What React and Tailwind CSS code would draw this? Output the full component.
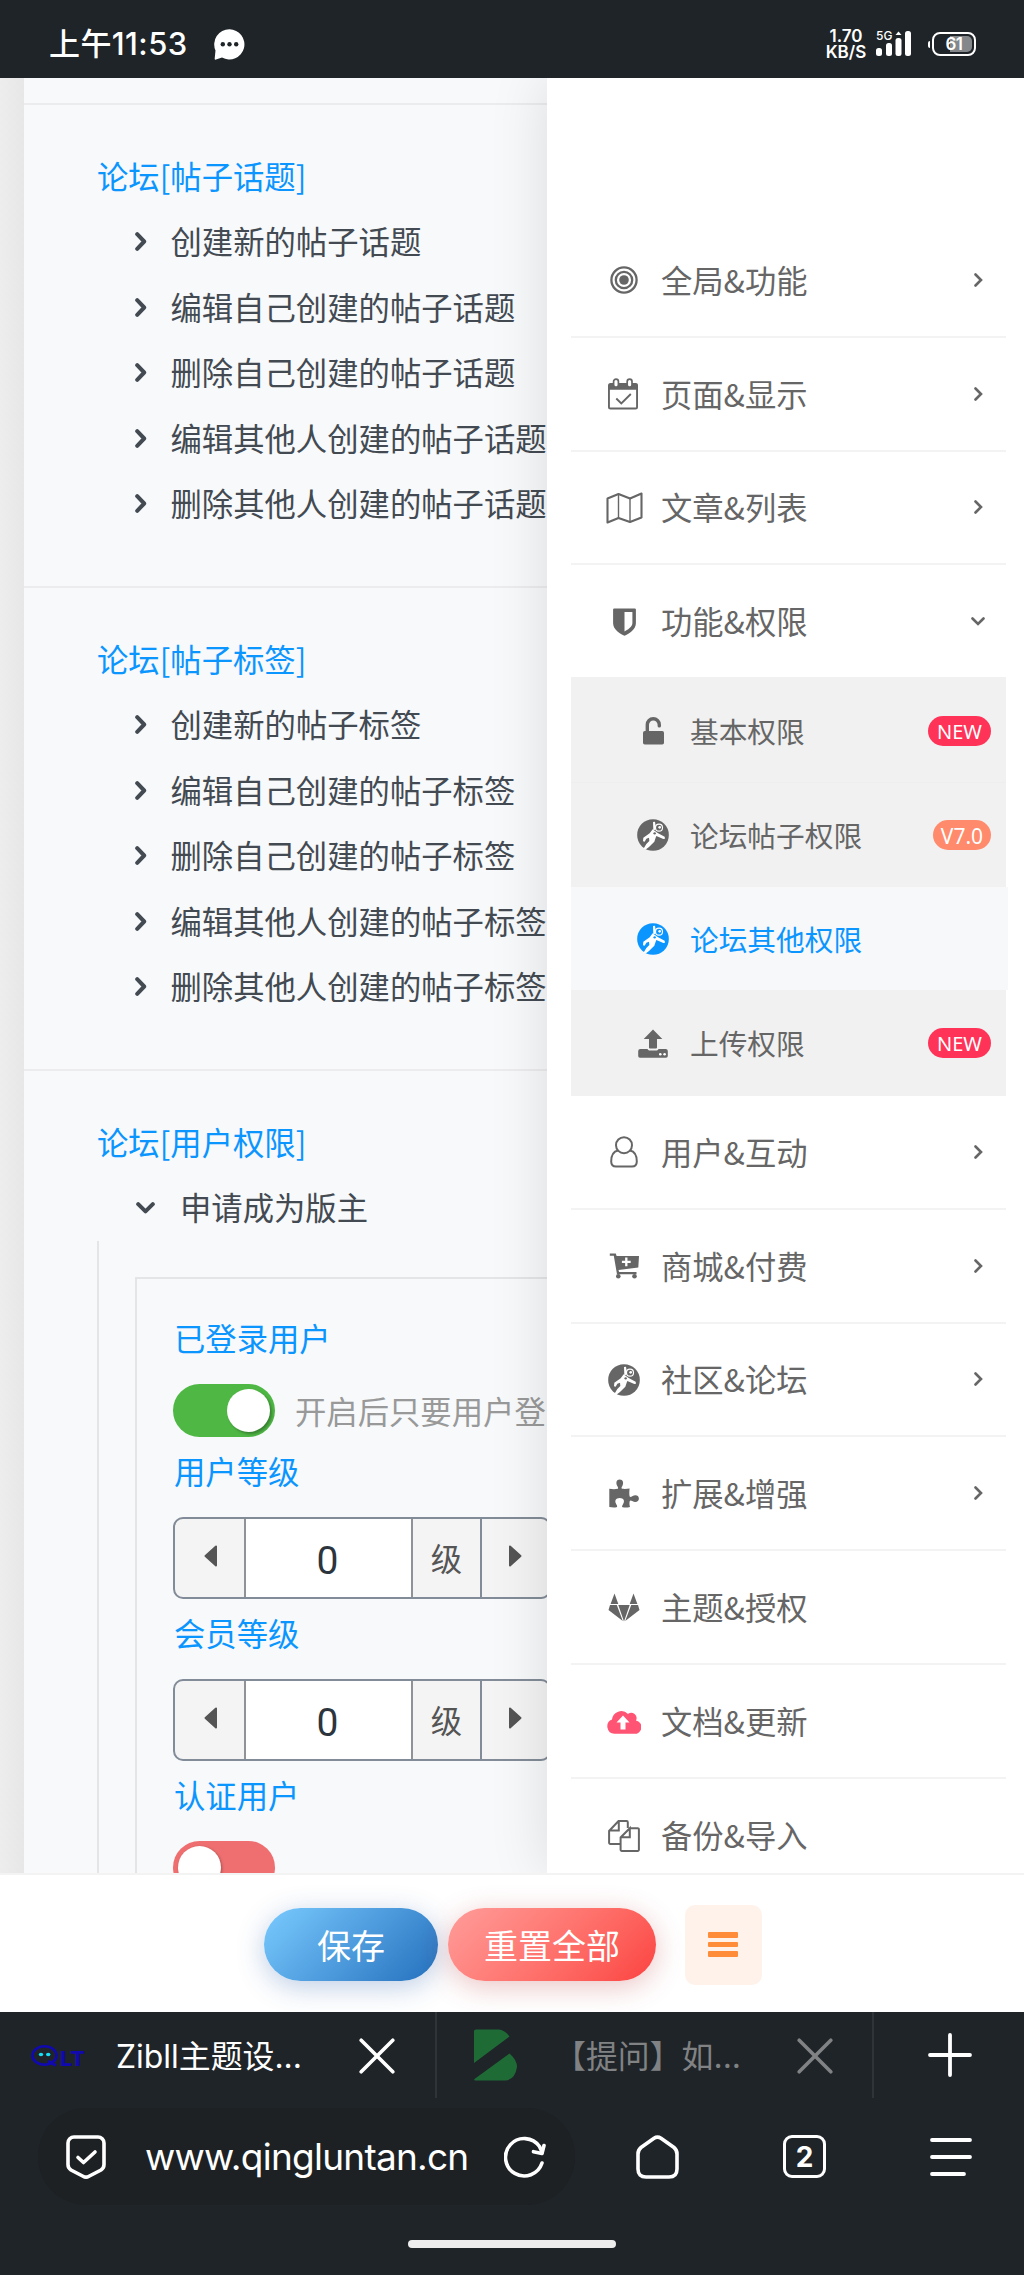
import React from "react";

const Svg = ({ w, h, vb, className = "", children }) => (
  <svg width={w} height={h} viewBox={vb || `0 0 ${w} ${h}`} className={`shrink-0 block ${className}`} fill="none">
    {children}
  </svg>
);

const ChevronRight = () => (
  <Svg w={12} h={19} className="mt-px">
    <path d="M2.2 2.2 9.2 9.5 2.2 16.8" stroke="#434a52" strokeWidth="4" strokeLinecap="round" strokeLinejoin="round" />
  </Svg>
);
const ChevronDown = () => (
  <Svg w={19} h={12} className="mt-px">
    <path d="M2.2 2.2 9.5 9.4 16.8 2.2" stroke="#434a52" strokeWidth="4" strokeLinecap="round" strokeLinejoin="round" />
  </Svg>
);

const Target = () => (
  <Svg w={28} h={28}>
    <circle cx="14" cy="14" r="12.6" stroke="currentColor" strokeWidth="2.3" />
    <circle cx="14" cy="14" r="8.2" stroke="currentColor" strokeWidth="2.3" />
    <circle cx="14" cy="14" r="4.8" fill="currentColor" />
  </Svg>
);
const Calendar = () => (
  <Svg w={30} h={32} className="mr-[2px]">
    <path d="M2.5 5h25A2.3 2.3 0 0 1 30 7.5V29a2.5 2.5 0 0 1-2.5 2.5h-25A2.5 2.5 0 0 1 0 29V7.5A2.5 2.5 0 0 1 2.5 5Zm-.6 6.8V29.6h26.200V11.8Z" fill="currentColor" fillRule="evenodd" />
    <rect x="5.6" y="1.2" width="4.8" height="8" rx="2.4" fill="#fff" stroke="currentColor" strokeWidth="1.7" />
    <rect x="19.2" y="1.2" width="4.8" height="8" rx="2.4" fill="#fff" stroke="currentColor" strokeWidth="1.7" />
    <path d="M8.300 20.500 13.300 25.500 22.800 16" stroke="currentColor" strokeWidth="1.9" />
  </Svg>
);
const MapIcon = () => (
  <Svg w={37} h={32}>
    <path d="M1.5 6.5 12.5 2 24 6.5 35.5 1.5V25.5L24 30 12.5 26 1.5 30.5Z" stroke="currentColor" strokeWidth="2.1" strokeLinejoin="round" />
    <path d="M12.5 2V26M24 6.5V30" stroke="currentColor" strokeWidth="1.4" />
  </Svg>
);
const Shield = () => (
  <Svg w={23} h={28}>
    <path d="M1.2.4h20.600a1.100 1.100 0 0 1 1.100 1.100v13.700c0 6.400-7.300 10.900-11.400 12.600C7.4 26.1.1 21.6.1 15.2V1.5A1.100 1.100 0 0 1 1.2.4ZM11.500 4v19.600c3-1.500 7.900-4.700 7.900-8.500V4Z" fill="currentColor" fillRule="evenodd" />
  </Svg>
);
const Unlock = () => (
  <Svg w={21} h={28}>
    <rect x="0" y="14" width="21" height="13.5" rx="1.8" fill="currentColor" />
    <path d="M4.300 15V7.800a6 6 0 0 1 12-.1v1.200" stroke="currentColor" strokeWidth="3.4" strokeLinecap="round" />
  </Svg>
);
const Astronaut = () => (
  <Svg w={32} h={32} vb="0 0 96 96">
    <circle cx="48" cy="48" r="47.5" fill="currentColor" />
    <path d="M48 9l6-1 2 14-1 10-6 2ZM47 31l15 11 21 11 1 6-5 1-21-9-2 5-4 12-16 16-8 6-9 0 9-15 9-9-1-10-8 3-5 9-5-1 1-11 19-13Z" fill="#fff" />
    <circle cx="66" cy="26" r="10.5" stroke="#fff" strokeWidth="3.5" fill="currentColor" />
    <circle cx="68" cy="25" r="4" fill="#fff" />
    <circle cx="53" cy="43" r="3.6" fill="currentColor" />
  </Svg>
);
const Upload = () => (
  <Svg w={30} h={29}>
    <path d="M15 .5 24.300 10H19v8.500a1 1 0 0 1-1 1h-6a1 1 0 0 1-1-1V10H5.700Z" fill="currentColor" />
    <path d="M2.300 20H9.500c.6 1.200 1.500 1.600 2.500 1.600h6c1 0 2-.4 2.500-1.600H27.700A2.100 2.100 0 0 1 29.800 22v5a1.800 1.800 0 0 1-1.800 1.800H2A1.800 1.800 0 0 1 .2 27V22a2.100 2.100 0 0 1 2.100-2Z" fill="currentColor" />
    <circle cx="22.300" cy="25.200" r="1.300" fill="#fff" />
    <circle cx="26.600" cy="25.200" r="1.300" fill="#fff" />
  </Svg>
);
const User = () => (
  <Svg w={28} h={32}>
    <circle cx="14" cy="9.2" r="8" stroke="currentColor" strokeWidth="2" />
    <path d="M8 14.500C3.200 15.500 1.200 20 1.200 25.500 1.200 29 3 30.600 6 30.600H22c3 0 4.800-1.600 4.800-5.100 0-5.500-2-10-6.800-11" stroke="currentColor" strokeWidth="2" />
  </Svg>
);
const Cart = () => (
  <Svg w={30} h={26}>
    <path d="M.8.5H6.800L7.600 3H30L29.300 14.500 9.500 17l.6 2H27.500v2.300H8L4.800 2.800H.8Z" fill="currentColor" />
    <circle cx="9.3" cy="23.3" r="2.3" fill="currentColor" />
    <circle cx="25.5" cy="23.3" r="2.3" fill="currentColor" />
    <path d="M17.300 4.500v8.800M12.900 8.900h8.800" stroke="#fff" strokeWidth="2.3" />
  </Svg>
);
const Puzzle = () => (
  <Svg w={30} h={29}>
    <path d="M.3 9.800c3 .4 6 .5 8.400 0 .8-.5.400-1.500-.3-2.600C6.500 3.800 7.400.4 10.700.4s4.400 3.400 2.500 6.800c-.8 1.200-1 2.200 0 2.600 2.500.3 5 .1 7.400-.3-.3 2.800-.5 5.500 0 7.700.4 1.200 1.500.8 2.600 0 3.200-2 6.700-1 6.700 2.300s-3.500 4.400-6.700 2.500c-1.200-.8-2.200-.8-2.600.4-.4 2 0 3.800.4 5.600-2.500.6-5 .7-7.300.3-1-.5-.8-1.600.2-2.900 2.400-3.600.6-6.400-3.200-6.400s-5.600 2.800-3.300 6.400c1 1.400 1.100 2.500 0 2.900-2.300.3-4.900.2-7.100-.3Z" fill="currentColor" />
  </Svg>
);
const Fox = () => (
  <Svg w={32} h={29}>
    <path d="M6.500.5 10.300 11H2.600ZM25.500.5 29.400 11H21.700ZM10.300 12H21.700L16 28.500ZM2 12H8.800L14.800 28 .5 17ZM30 12H23.200L17.200 28 31.500 17Z" fill="currentColor" />
  </Svg>
);
const CloudUp = () => (
  <Svg w={34} h={25}>
    <path d="M7.500 24.700A7.300 7.300 0 0 1 5 10.600 9.300 9.300 0 0 1 21 5a5.300 5.300 0 0 1 8 6.500 6.700 6.700 0 0 1-2.500 13.200Z" fill="#ff5473" />
    <path d="M16 6.500 22.500 13.500H18.500V20.500H13.500V13.500H9.500Z" fill="#fff" />
  </Svg>
);
const Copy = () => (
  <Svg w={32} h={32}>
    <path d="M12 24H2.300A1.200 1.200 0 0 1 1.100 22.800V11L10.500 1.100H18.600A1.200 1.200 0 0 1 19.800 2.300V8M10.800 1.500V10.500H1.500" stroke="currentColor" strokeWidth="2" />
    <path d="M22.500 8.200H29.700A1.200 1.200 0 0 1 30.900 9.400V29.700A1.200 1.200 0 0 1 29.700 30.900H13.800A1.200 1.200 0 0 1 12.600 29.700V17.500L21.800 8.200V17.200H13" stroke="currentColor" strokeWidth="2" />
  </Svg>
);

const topItems = [
  ["全局&功能", Target, "r"],
  ["页面&显示", Calendar, "r"],
  ["文章&列表", MapIcon, "r"],
  ["功能&权限", Shield, "d"],
];
const bottomItems = [
  ["用户&互动", User, "r"],
  ["商城&付费", Cart, "r"],
  ["社区&论坛", Astronaut, "r"],
  ["扩展&增强", Puzzle, "r"],
  ["主题&授权", Fox, ""],
  ["文档&更新", CloudUp, ""],
  ["备份&导入", Copy, ""],
];

function MenuItem({ label, Icon, dir }) {
  return (
    <div className="flex h-[113.75px] items-center border-b-2 border-[#f3f3f4] text-[#666] last:border-b-0">
      <span className="ml-[33px] flex w-10 justify-center pt-px">
        <Icon />
      </span>
      <span className="ml-[17px] flex-1 text-[31.3px] leading-[46px]">{label}</span>
      <span className="mr-[20px] flex w-4 justify-center">
        {dir === "r" && (
          <Svg w={9} h={14}>
            <path d="M1.5 1.500 7 7 1.5 12.500" stroke="#666" strokeWidth="2.6" strokeLinecap="round" />
          </Svg>
        )}
        {dir === "d" && (
          <Svg w={14} h={9}>
            <path d="M1.5 1.500 7 7 12.500 1.500" stroke="#666" strokeWidth="2.6" strokeLinecap="round" />
          </Svg>
        )}
      </span>
    </div>
  );
}

function SubItem({ label, Icon, badge, cls }) {
  return (
    <div className={`flex items-center ${cls}`}>
      <span className="ml-[62px] flex w-10 justify-center">
        <Icon />
      </span>
      <span className="ml-[17px] flex-1 text-[28.7px] leading-[42px]">{label}</span>
      {badge && (
        <span
          className={`mr-[15px] flex h-[30px] items-center justify-center rounded-full font-['Noto_Sans'] leading-[30px] text-white ${
            badge === "NEW" ? "w-[63px] bg-[#ff3358] text-[20px]" : "w-[58px] bg-[#ff8a6c] text-[21px]"
          }`}
        >
          <span className="pt-[2px]">{badge}</span>
        </span>
      )}
    </div>
  );
}

const Title = ({ children }) => (
  <div className="flex h-[65.5px] items-center pb-[2px] pl-[73px] text-[#0b95ff]">{children}</div>
);
const Item = ({ children }) => (
  <div className="flex h-[65.5px] items-center gap-[23.5px] pb-[2px] pl-[111px] whitespace-nowrap">
    <ChevronRight />
    {children}
  </div>
);
function Section({ name }) {
  return (
    <section className="h-[483px] border-b-2 border-[#ececee] pt-[39px]">
      <Title>论坛[{name}]</Title>
      <Item>创建新的{name}</Item>
      <Item>编辑自己创建的{name}</Item>
      <Item>删除自己创建的{name}</Item>
      <Item>编辑其他人创建的{name}</Item>
      <Item>删除其他人创建的{name}</Item>
    </section>
  );
}

function Spinner() {
  return (
    <div className="mt-3 mb-[3px] flex h-[81.5px] w-[378px] overflow-hidden rounded-[10px] border-2 border-[#828c98] bg-[#f4f4f4] text-[#555]">
      <div className="flex w-[71px] items-center justify-end border-r-2 border-[#8f9296] pr-[27px] pb-[3px]">
        <Svg w={13} h={22}>
          <path d="M12 1.500v19L1.500 11Z" fill="#555" stroke="#555" strokeWidth="2" strokeLinejoin="round" />
        </Svg>
      </div>
      <div className="flex w-[167px] items-center justify-center border-r-2 border-[#8f9296] bg-white pt-[6px] pr-[2px] font-['Roboto'] text-[39px] text-[#2c353d]">0</div>
      <div className="flex w-[69px] items-center justify-center border-r-2 border-[#828c98]">级</div>
      <div className="flex flex-1 items-center pb-[3px] pl-[27px]">
        <Svg w={13} h={22}>
          <path d="M1 1.500v19L11.500 11Z" fill="#555" stroke="#555" strokeWidth="2" strokeLinejoin="round" />
        </Svg>
      </div>
    </div>
  );
}

const Label = ({ children }) => <div className="flex h-[65.5px] items-center pb-[2px] pl-px text-[#0b95ff]">{children}</div>;

function StatusBar() {
  return (
    <header className="flex h-[78px] shrink-0 items-center bg-[#1f2428] pt-[10px] pl-[49px] pr-[48px] text-white">
      <span className="w-[165px] pt-px text-[31px] font-medium tracking-[0.4px] whitespace-nowrap font-['Inter','Noto_Sans_CJK_SC',sans-serif]">上午11:53</span>
      <Svg w={31} h={31}>
        <path d="M15.500.3A15.100 15.100 0 1 1 8 28.600L2 30.600a1 1 0 0 1-1.300-1.200L1.500 21.500A15.100 15.100 0 0 1 15.500.3Z" fill="#fff" />
        <circle cx="8.8" cy="15.3" r="2.2" fill="#1f2428" />
        <circle cx="15.5" cy="15.3" r="2.2" fill="#1f2428" />
        <circle cx="22.2" cy="15.3" r="2.2" fill="#1f2428" />
      </Svg>
      <div className="ml-auto flex w-[42px] flex-col items-center font-['Inter'] text-[17px] leading-[16px] font-semibold">
        <span>1.70</span>
        <span>KB/S</span>
      </div>
      <div className="relative ml-[9px] h-[26px] w-[35px]">
        <Svg w={35} h={26}>
          <rect x="0" y="17" width="6" height="8" rx="2.5" fill="#fff" />
          <rect x="10" y="12" width="6" height="13" rx="2.5" fill="#fff" />
          <rect x="19.5" y="7" width="6" height="18" rx="2.5" fill="#fff" />
          <path d="M22.500.5 25.500 4H19.500Z" fill="#fff" />
          <rect x="29" y="0" width="6" height="25" rx="2.5" fill="#fff" />
        </Svg>
        <span className="absolute -top-[2px] left-0 font-['Inter'] text-[12px] leading-[14px] font-medium">5G</span>
      </div>
      <div className="ml-[17px] flex items-center gap-[2px]">
        <span className="h-[7px] w-[2px] rounded-l-full bg-white" />
        <span className="flex h-[24px] w-[44px] items-center justify-center rounded-[8px] border-2 border-white p-[2px]">
          <span className="flex h-full w-full items-center justify-center rounded-[5px] bg-linear-to-r from-[#1f2428] from-[40%] to-[#85888a] to-[40%] font-['Inter'] text-[17px] leading-none font-semibold tracking-[-0.5px]">
            61
          </span>
        </span>
      </div>
    </header>
  );
}

function Close({ color }) {
  return (
    <Svg w={36} h={36} className="mt-px">
      <path d="M2.200 2.200 33.800 33.800M33.800 2.200 2.200 33.800" stroke={color} strokeWidth="3.6" strokeLinecap="round" />
    </Svg>
  );
}

function Browser() {
  return (
    <footer className="flex h-[263px] flex-col bg-[#1f2428] text-white">
      <div className="flex h-[86px]">
        <div className="flex w-[437px] items-center border-r-2 border-[#303439] pl-[31px]">
          <div className="flex h-[26px] w-[56px] shrink-0 items-center pt-[2px]">
            <Svg w={28} h={24}>
              <ellipse cx="13.5" cy="11.5" rx="12" ry="9.3" stroke="#1109b0" strokeWidth="2.6" />
              <path d="M17 17 25 21.500" stroke="#1109b0" strokeWidth="3" />
              <ellipse cx="10" cy="10.5" rx="2.2" ry="1.7" fill="#16e0f5" />
              <ellipse cx="17.2" cy="10.5" rx="2.2" ry="1.7" fill="#16e0f5" />
            </Svg>
            <span className="mt-[6px] ml-[1px] origin-left scale-x-[1.080] font-['Inter'] text-[20px] leading-none font-extrabold text-[#1109b0]">LT</span>
          </div>
          <span className="ml-[29px] w-[243px] pt-[4px] text-[31.9px] whitespace-nowrap font-['Inter','Noto_Sans_CJK_SC',sans-serif]">Zibll主题设...</span>
          <Close color="#fff" />
        </div>
        <div className="flex w-[437px] items-center border-r-2 border-[#303439] pl-[37px]">
          <Svg w={43} h={52}>
            <path d="M0 2.500A2 2 0 0 1 2 .4H25Q31 1 35.500 7.500L0 34ZM.5 50 35.500 24.500Q43 31 43 38 41 51 31 51.600H1.500Q-.5 51.500.5 50Z" fill="#1f6b36" />
          </Svg>
          <span className="ml-[37px] w-[243px] pt-[4px] text-[31.9px] whitespace-nowrap text-[#808284] font-['Inter','Noto_Sans_CJK_SC',sans-serif]">【提问】如...</span>
          <Close color="#808284" />
        </div>
        <div className="flex flex-1 items-center pl-[54px]">
          <Svg w={44} h={44}>
            <path d="M22 2v40M2 22h40" stroke="#fff" strokeWidth="3.8" strokeLinecap="round" />
          </Svg>
        </div>
      </div>
      <div className="mt-[9px] flex h-[97px] items-center pt-[2px] pl-[38px]">
        <div className="flex h-[97px] w-[537px] items-center rounded-[48px] bg-[#1d2124] pl-[28px]">
          <Svg w={40} h={44}>
            <path d="M8 2H32a6 6 0 0 1 6 6V29.500Q38 33 35 35L23 41.200Q20 43 17 41.200L5 35Q2 33 2 29.500V8A6 6 0 0 1 8 2Z" stroke="#fff" strokeWidth="3.6" />
            <path d="M12 22.500 17.500 27.500 29 17" stroke="#fff" strokeWidth="3.6" strokeLinecap="round" strokeLinejoin="round" />
          </Svg>
          <span className="ml-[39px] w-[324px] pt-px font-['Inter'] text-[37px] tracking-[-0.75px] whitespace-nowrap">www.qingluntan.cn</span>
          <Svg w={42} h={42} className="ml-[35px]">
            <path d="M38 27A18.700 18.700 0 1 1 35.500 10.500L38 16" stroke="#fff" strokeWidth="3.6" strokeLinecap="round" />
            <path d="M29.500 15.700 38 17.500 40 9.500" stroke="#fff" strokeWidth="3.6" strokeLinecap="round" strokeLinejoin="round" />
          </Svg>
        </div>
        <Svg w={43} h={44} className="ml-[61px]">
          <path d="M18 3.200Q21.500 1 25 3.200L38 12.500Q41 15 41 19V34Q41 42 33 42H10Q2 42 2 34V19Q2 15 5 12.500Z" stroke="#fff" strokeWidth="3.6" />
        </Svg>
        <div className="ml-[104px] flex size-[43px] items-center justify-center rounded-[9px] border-[3.500px] border-white font-['Inter'] text-[28px] leading-none font-bold">2</div>
        <Svg w={42} h={38} className="ml-[104px]">
          <path d="M2 2H40M2 19H40M2 36H34" stroke="#fff" strokeWidth="3.8" strokeLinecap="round" />
        </Svg>
      </div>
      <div className="mx-auto mt-[36px] h-[8px] w-[208px] rounded-full bg-[#ededed]" />
    </footer>
  );
}

export default function App() {
  return (
    <div className="flex h-[2275px] w-[1024px] flex-col overflow-hidden bg-white font-['Noto_Sans_CJK_SC',sans-serif]">
      <StatusBar />
      <div className="flex h-[1795px] shrink-0 overflow-hidden">
        <div className="w-6 shrink-0 bg-linear-to-r from-[#ededed] to-[#e7e7e7]" />
        <main className="h-full w-[523px] shrink-0 overflow-hidden bg-[#f7f9fb] text-[31.35px] leading-[46px] text-[#434a52]">
          <div className="h-[27px] border-b-2 border-[#ececee]" />
          <Section name="帖子话题" />
          <Section name="帖子标签" />
          <section className="pt-[39px]">
            <Title>论坛[用户权限]</Title>
            <div className="flex h-[65.5px] items-center gap-[25px] pb-[2px] pl-[112px]">
              <ChevronDown />
              申请成为版主
            </div>
            <div className="ml-[73px] border-l-2 border-[#e3e5e7] pt-9 pl-9">
              <div className="w-[480px] border-2 border-[#e3e5e7] pt-[27px] pl-9 whitespace-nowrap">
                <Label>已登录用户</Label>
                <div className="mt-3 mb-[3px] flex h-[53px] items-center">
                  <span className="flex h-[53px] w-[102px] shrink-0 items-center justify-end rounded-full bg-[#4fb845] pr-[5px]">
                    <span className="size-[43px] rounded-full bg-white shadow-[2px_2px_3px_rgba(0,0,0,0.3)]" />
                  </span>
                  <span className="ml-[20px] pt-px text-[#999]">开启后只要用户登</span>
                </div>
                <Label>用户等级</Label>
                <Spinner />
                <Label>会员等级</Label>
                <Spinner />
                <Label>认证用户</Label>
                <span className="mt-3 flex h-[53px] w-[102px] items-center rounded-full bg-[#ef6f70] pl-[5px]">
                  <span className="size-[43px] rounded-full bg-white shadow-[1px_1px_3px_rgba(0,0,0,0.3)]" />
                </span>
              </div>
            </div>
          </section>
        </main>
        <aside className="relative w-[477px] shrink-0 bg-white pt-[146px] pl-6 shadow-[0_0_56px_rgba(0,0,0,0.12)]">
          <nav className="w-[435px]">
            {topItems.map(([l, I, d]) => (
              <MenuItem key={l} label={l} Icon={I} dir={d} />
            ))}
            <div className="-mt-[2px] bg-[#f1f1f1] text-[#666]">
              <SubItem label="基本权限" Icon={Unlock} badge="NEW" cls="h-[106px] border-b border-[#eeeeef] pt-[2px]" />
              <SubItem label="论坛帖子权限" Icon={Astronaut} badge="V7.0" cls="h-[104px]" />
              <SubItem label="论坛其他权限" Icon={Astronaut} cls="h-[103px] w-[437px] bg-[#f6f8fa] text-[#0b95ff]" />
              <SubItem label="上传权限" Icon={Upload} badge="NEW" cls="h-[106px]" />
            </div>
            {bottomItems.map(([l, I, d]) => (
              <MenuItem key={l} label={l} Icon={I} dir={d} />
            ))}
          </nav>
        </aside>
      </div>
      <div className="flex h-[139px] shrink-0 items-center border-t-2 border-[#f3f3f3] bg-white pt-[2px] pl-[264px] text-[34px] text-white">
        <button className="flex h-[73px] w-[174px] items-center justify-center rounded-full bg-linear-135 from-[#7acbff] to-[#2470bd] pb-px shadow-[0_6px_28px_rgba(36,90,170,0.300)]">保存</button>
        <button className="ml-[10px] flex h-[73px] w-[208px] items-center justify-center rounded-full bg-linear-135 from-[#ff9c9a] to-[#fb4140] pb-px shadow-[0_6px_28px_rgba(190,60,60,0.300)]">重置全部</button>
        <button className="ml-[28.5px] flex h-[80px] w-[77px] flex-col items-center justify-center gap-[4px] rounded-[10px] bg-[#fff2ea]">
          <span className="h-[5.500px] w-[30px] rounded-[1px] bg-[#ff8c38]" />
          <span className="h-[5.500px] w-[30px] rounded-[1px] bg-[#ff8c38]" />
          <span className="h-[5.500px] w-[30px] rounded-[1px] bg-[#ff8c38]" />
        </button>
      </div>
      <Browser />
    </div>
  );
}
